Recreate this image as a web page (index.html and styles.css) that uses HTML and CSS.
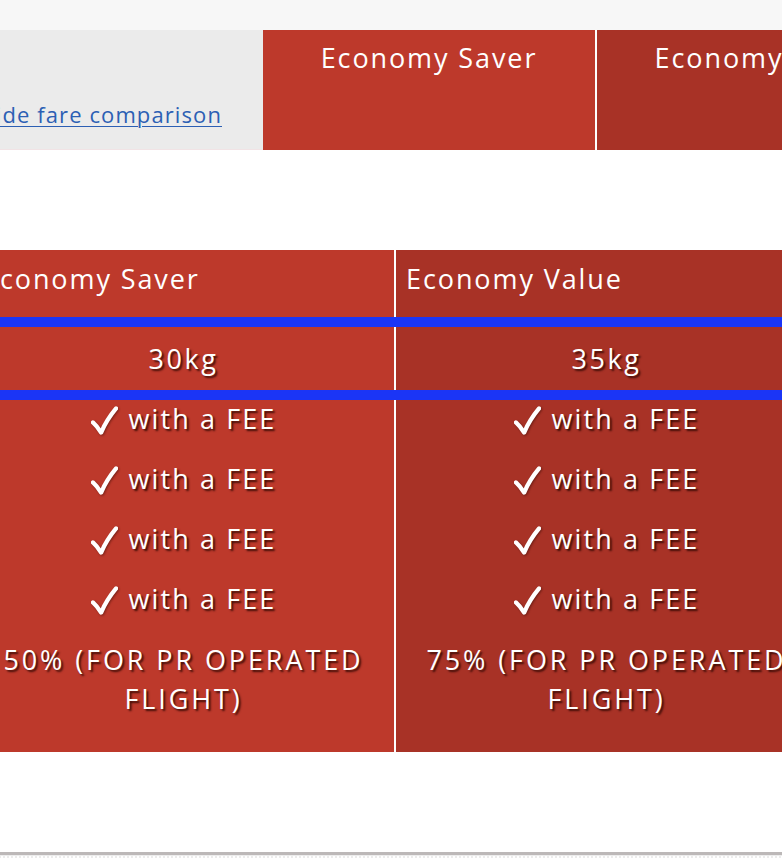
FILE: index.html
```html
<!DOCTYPE html>
<html lang="en">
<head>
<meta charset="utf-8">
<title>Fare comparison</title>
<link rel="stylesheet" href="styles.css">
</head>
<body>
<div class="top-strip"></div>

<div class="compare-head">
  <div class="label-cell">
    <a class="toggle-link" href="#">Hide fare comparison</a>
  </div>
  <div class="fare-head saver">Economy Saver</div>
  <div class="fare-head value">Economy Value</div>
</div>

<div class="fare-table">
  <div class="row head-row">
    <div class="cell saver">Economy Saver</div>
    <div class="cell value">Economy Value</div>
  </div>
  <div class="divider"></div>
  <div class="row weight-row">
    <div class="cell saver">30kg</div>
    <div class="cell value">35kg</div>
  </div>
  <div class="divider"></div>
  <div class="row features-row">
    <div class="cell saver">
      <ul class="feature-list">
        <li class="feature"><svg class="check" viewBox="0 0 28 30"><path d="M2 16.5 Q6 20 10.5 27 Q16 14 26 2"/></svg><span>with a FEE</span></li>
        <li class="feature"><svg class="check" viewBox="0 0 28 30"><path d="M2 16.5 Q6 20 10.5 27 Q16 14 26 2"/></svg><span>with a FEE</span></li>
        <li class="feature"><svg class="check" viewBox="0 0 28 30"><path d="M2 16.5 Q6 20 10.5 27 Q16 14 26 2"/></svg><span>with a FEE</span></li>
        <li class="feature"><svg class="check" viewBox="0 0 28 30"><path d="M2 16.5 Q6 20 10.5 27 Q16 14 26 2"/></svg><span>with a FEE</span></li>
        <li class="feature caps">50% (FOR PR OPERATED FLIGHT)</li>
      </ul>
    </div>
    <div class="cell value">
      <ul class="feature-list">
        <li class="feature"><svg class="check" viewBox="0 0 28 30"><path d="M2 16.5 Q6 20 10.5 27 Q16 14 26 2"/></svg><span>with a FEE</span></li>
        <li class="feature"><svg class="check" viewBox="0 0 28 30"><path d="M2 16.5 Q6 20 10.5 27 Q16 14 26 2"/></svg><span>with a FEE</span></li>
        <li class="feature"><svg class="check" viewBox="0 0 28 30"><path d="M2 16.5 Q6 20 10.5 27 Q16 14 26 2"/></svg><span>with a FEE</span></li>
        <li class="feature"><svg class="check" viewBox="0 0 28 30"><path d="M2 16.5 Q6 20 10.5 27 Q16 14 26 2"/></svg><span>with a FEE</span></li>
        <li class="feature caps">75% (FOR PR OPERATED FLIGHT)</li>
      </ul>
    </div>
  </div>
</div>

<div class="page-footer"></div>
</body>
</html>
```

FILE: styles.css
```css
html, body {
  margin: 0;
  padding: 0;
}
body {
  background: #ffffff;
  overflow: hidden;
  font-family: "Open Sans", "Noto Sans", sans-serif;
  font-weight: 500;
  color: #ffffff;
}

.top-strip {
  height: 30px;
  background: #f7f7f7;
}

/* ---------- top comparison header ---------- */
.compare-head {
  display: flex;
  height: 120px;
  margin-left: -80px;
}
.label-cell {
  width: 343px;
  flex: none;
  box-sizing: border-box;
  background: #ebebeb;
  border-bottom: 1px solid #f1e3e5;
  display: flex;
  align-items: flex-end;
  justify-content: flex-end;
  padding: 0 41px 20px 0;
}
.toggle-link {
  white-space: nowrap;
  font-size: 22px;
  font-weight: 400;
  line-height: 30px;
  letter-spacing: 1.1px;
  color: #2c5fb4;
  text-decoration: underline;
  text-underline-offset: 3px;
  text-decoration-thickness: 1px;
}
.fare-head {
  flex: none;
  width: 332px;
  box-sizing: border-box;
  padding-top: 10px;
  font-size: 27px;
  line-height: 36px;
  letter-spacing: 1.9px;
  text-align: center;
  white-space: nowrap;
}
.fare-head.saver {
  background: #bd392b;
}
.fare-head.value {
  width: 334px;
  background: #a83226;
  border-left: 2px solid #ffffff;
}

/* ---------- comparison table ---------- */
.fare-table {
  margin-top: 100px;
  margin-left: -27px;
  width: 844px;
}
.row {
  display: flex;
}
.cell {
  flex: none;
  width: 421px;
  box-sizing: border-box;
}
.cell.saver {
  background: #bd392b;
}
.cell.value {
  width: 423px;
  background: #a83226;
  border-left: 2px solid #ffffff;
}
.divider {
  height: 10px;
  background: #1b35f6;
}

.head-row .cell {
  height: 67px;
  padding: 11px 0 0 10px;
  font-size: 27px;
  line-height: 36px;
  letter-spacing: 1.9px;
  white-space: nowrap;
}

.weight-row .cell {
  height: 63px;
  display: flex;
  align-items: center;
  justify-content: center;
  font-size: 27px;
  line-height: 36px;
  letter-spacing: 2.6px;
  text-shadow: 2px 2px 2px rgba(45, 6, 0, 0.85);
}

.features-row .cell {
  padding-bottom: 34px;
}
.feature-list {
  list-style: none;
  margin: 0;
  padding: 0;
  display: flex;
  flex-direction: column;
  gap: 22px;
}
.feature {
  display: flex;
  align-items: center;
  justify-content: center;
  gap: 11px;
  font-size: 27px;
  line-height: 38px;
  letter-spacing: 2.1px;
  white-space: nowrap;
  text-shadow: 2px 2px 2px rgba(45, 6, 0, 0.85);
}
.feature.caps {
  display: block;
  text-align: center;
  white-space: normal;
  letter-spacing: 2.9px;
  line-height: 39px;
  padding: 0 2px;
}
.check {
  width: 27px;
  height: 30px;
  flex: none;
  margin-top: 3px;
  filter: blur(0.7px) drop-shadow(1px 1px 1px rgba(45, 6, 0, 0.45));
}
.check path {
  fill: none;
  stroke: #ffffff;
  stroke-width: 4.4;
  stroke-linecap: round;
  stroke-linejoin: round;
}

/* ---------- footer edge ---------- */
.page-footer {
  margin-top: 100px;
  height: 40px;
  border-top: 3px solid #bcb8b8;
  background-color: #ececec;
  background-image: radial-gradient(circle, #ffffff 0.8px, transparent 1px);
  background-size: 4px 4px;
}
```
